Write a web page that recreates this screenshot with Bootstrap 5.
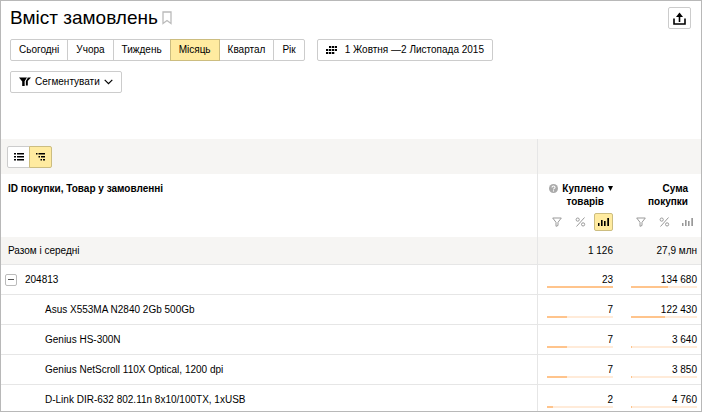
<!DOCTYPE html>
<html lang="uk">
<head>
<meta charset="utf-8">
<meta name="viewport" content="width=device-width, initial-scale=1">
<title>Вміст замовлень</title>
<link href="https://cdn.jsdelivr.net/npm/bootstrap@5.3.0/dist/css/bootstrap.min.css" rel="stylesheet">
<style>
body { font-family: "Liberation Sans", Arial, sans-serif; font-size: 10px; line-height: 14px; color: #000; background: #fff; }
.frame { height: 100vh; border: 1px solid #b8b8b8; }
.page-title { font-size: 19px; line-height: 22px; font-weight: 400; }
.page-head { padding: 6px 10px 0 9px; }
.tools { padding: 10px 9px 0; gap: 12px; }
.btn { --bs-btn-font-size: 10px; --bs-btn-line-height: 14px; --bs-btn-padding-x: 8px; --bs-btn-padding-y: 3px; --bs-btn-border-radius: 2px; --bs-btn-border-color: #ccc; --bs-btn-color: #000; --bs-btn-bg: #fff; --bs-btn-hover-bg: #f6f5f3; --bs-btn-hover-border-color: #bbb; --bs-btn-active-bg: #ffeba0; --bs-btn-active-border-color: #ccbd80; --bs-btn-active-color: #000; height: 22px; display: inline-flex; align-items: center; justify-content: center; white-space: nowrap; }
.btn-square { --bs-btn-padding-x: 0px; width: 23px; }
.segment-bar { padding: 10px 9px 46px; }
.report { table-layout: fixed; border-collapse: separate; border-spacing: 0; }
.report th, .report td { padding: 0 9px; }
.report .num { width: 84px; text-align: right; }
.report .num:nth-child(2) { width: 85px; border-left: 1px solid #e6e6e6; }
.report .num:last-child { width: 79px; padding-right: 4px; }
.report .name { padding-left: 7px; }
.report .strip .name { padding-left: 6px; }
.strip td { background: #f6f5f3; height: 35px; }
.heads th { height: 63px; padding-top: 8px; vertical-align: top; }
.totals td { background: #f6f5f3; height: 28px; border-bottom: 1px solid #e6e6e6; vertical-align: middle; }
.item td { height: 30px; border-bottom: 1px solid #e6e6e6; padding-top: 8px; line-height: 13px; vertical-align: top; }
.report .item .name { padding-left: 4px; }
.report .child .name { padding-left: 44px; }
.fold { width: 12px; height: 12px; border: 1px solid #bbb; border-radius: 2px; background: #fff; }
.meter { height: 2px; background: #ffebd9; }
.meter-fill { height: 2px; background: #ffc48c; }
.col-label { line-height: 13px; }
.col-label-end { padding-right: 9px; }
.col-icons { margin-top: 5px; height: 18px; }
.icon-btn { width: 19px; height: 18px; border: 1px solid transparent; border-radius: 2px; background: none; color: #999; }
.icon-btn.on { background: #ffeba0; border-color: #ccbd80; color: #000; }
svg { display: block; flex: none; }
</style>
<script src="https://cdn.jsdelivr.net/npm/bootstrap@5.3.0/dist/js/bootstrap.bundle.min.js"></script>
</head>
<body>
<svg class="d-none" aria-hidden="true">
  <symbol id="funnel" viewBox="0 0 10 10"><path d="M.7 1h8.600L6 5.300v3.200l-2 .8v-4z" fill="none" stroke="currentColor"/></symbol>
  <symbol id="percent" viewBox="0 0 11 10"><path d="M9.500 .5L1.500 9.500" stroke="currentColor" fill="none"/><circle cx="2.700" cy="2.600" r="1.600" stroke="currentColor" fill="none"/><circle cx="8.100" cy="7.400" r="1.600" stroke="currentColor" fill="none"/></symbol>
  <symbol id="bars" viewBox="0 0 11 8"><path d="M0 5h1.500v3H0zM3 2h1.600v6H3zM6 3h1.600v5H6zM9.300 0H11v8H9.300z" fill="currentColor"/></symbol>
</svg>
<div class="frame overflow-hidden d-flex flex-column">
  <header class="page-head d-flex justify-content-between align-items-start">
    <div class="d-flex align-items-center gap-1">
      <h1 class="page-title m-0">Вміст замовлень</h1>
      <svg width="10" height="14" viewBox="0 0 10 14" fill="none" stroke="#bbb" stroke-width="1.300"><path d="M1 1h8v11.500L5 9.500l-4 3z"/></svg>
    </div>
    <button type="button" class="btn btn-square" aria-label="Експорт">
      <svg width="13" height="13" viewBox="0 0 13 13" fill="none" stroke="#000" stroke-width="1.600"><path d="M1 6.500V12h11V6.500M6.500 10V2"/><path d="M3 5l3.500-4.500L10 5z" fill="#000" stroke="none"/></svg>
    </button>
  </header>
  <div class="tools d-flex">
    <div class="btn-group" role="group" aria-label="Період">
      <button type="button" class="btn">Сьогодні</button>
      <button type="button" class="btn">Учора</button>
      <button type="button" class="btn">Тиждень</button>
      <button type="button" class="btn active">Місяць</button>
      <button type="button" class="btn">Квартал</button>
      <button type="button" class="btn">Рік</button>
    </div>
    <button type="button" class="btn gap-2">
      <svg width="11" height="8" viewBox="0 0 11 8" fill="#000"><path d="M3 0h2.300v2H3zM6 0h2.300v2H6zM9 0h2v2H9zM0 3h2.300v2H0zM3 3h2.300v2H3zM6 3h2.300v2H6zM9 3h2v2H9zM0 6h2.300v2H0zM3 6h2.300v2H3zM6 6h2.300v2H6z"/></svg>
      <span>1 Жовтня —2 Листопада 2015</span>
    </button>
  </div>
  <div class="segment-bar">
    <button type="button" class="btn gap-1">
      <svg width="12" height="10" viewBox="0 0 12 10"><path d="M0 .5h8L5.800 4v5H3.200V4.500z" fill="#000"/><path d="M8.500 .5H12L8.800 4v4.500H6.800V4z" fill="#000"/><path d="M9 .2L6.200 4.300V9" fill="none" stroke="#fff" stroke-width=".6"/></svg>
      <span>Сегментувати</span>
      <svg width="9" height="6" viewBox="0 0 9 6" fill="none" stroke="#000" stroke-width="1.200"><path d="M.7 .8l3.800 3.800L8.300 .8"/></svg>
    </button>
  </div>
  <table class="report w-100">
    <thead>
      <tr class="strip">
        <td class="name">
          <div class="btn-group" role="group" aria-label="Вигляд">
            <button type="button" class="btn btn-square" aria-label="Список"><svg width="10" height="8" viewBox="0 0 10 8" fill="#000"><path d="M0 0h2v1.500H0zM3 0h7v1.500H3zM0 3h2v1.500H0zM3 3h7v1.500H3zM0 6h2v1.500H0zM3 6h7v1.500H3z"/></svg></button>
            <button type="button" class="btn btn-square active" aria-label="Дерево"><svg width="10" height="8" viewBox="0 0 10 8" fill="#000"><path d="M0 0h1.500v1.500H0zM2.500 0H9v1.500H2.500zM2.500 3H4v1.500H2.500zM5 3h4v1.500H5zM4.500 6H6v1.500H4.500zM7 6h2v1.500H7z"/></svg></button>
          </div>
        </td>
        <td class="num"></td><td class="num"></td>
      </tr>
      <tr class="heads">
        <th class="name" scope="col">ID покупки, Товар у замовленні</th>
        <th class="num" scope="col">
          <div class="d-flex justify-content-end gap-1">
            <svg width="9" height="13" viewBox="0 0 9 13"><circle cx="4.500" cy="6.500" r="4.500" fill="#aaa"/><path d="M3 5.600c0-2 3-2 3-.2 0 1-1.500 1-1.500 2.100M4.500 8.200v1.200" stroke="#fff" stroke-width="1.100" fill="none"/></svg>
            <div class="col-label">Куплено<br>товарів</div>
            <svg width="5" height="13" viewBox="0 0 5 13"><path d="M0 4h5L2.500 9z"/></svg>
          </div>
          <div class="col-icons d-flex justify-content-between">
            <button type="button" class="icon-btn p-0 d-flex align-items-center justify-content-center" aria-label="Фільтр"><svg width="10" height="10"><use href="#funnel"/></svg></button>
            <button type="button" class="icon-btn p-0 d-flex align-items-center justify-content-center" aria-label="Відсотки"><svg width="11" height="10"><use href="#percent"/></svg></button>
            <button type="button" class="icon-btn on p-0 d-flex align-items-center justify-content-center" aria-label="Графік"><svg width="11" height="8"><use href="#bars"/></svg></button>
          </div>
        </th>
        <th class="num" scope="col">
          <div class="col-label col-label-end">Сума<br>покупки</div>
          <div class="col-icons d-flex justify-content-between">
            <button type="button" class="icon-btn p-0 d-flex align-items-center justify-content-center" aria-label="Фільтр"><svg width="10" height="10"><use href="#funnel"/></svg></button>
            <button type="button" class="icon-btn p-0 d-flex align-items-center justify-content-center" aria-label="Відсотки"><svg width="11" height="10"><use href="#percent"/></svg></button>
            <button type="button" class="icon-btn p-0 d-flex align-items-center justify-content-center" aria-label="Графік"><svg width="11" height="8"><use href="#bars"/></svg></button>
          </div>
        </th>
      </tr>
    </thead>
    <tbody>
      <tr class="totals"><td class="name">Разом і середні</td><td class="num">1 126</td><td class="num">27,9 млн</td></tr>
      <tr class="item">
        <td class="name"><div class="d-flex align-items-center gap-2"><button type="button" class="fold p-0 d-flex align-items-center justify-content-center" aria-label="Згорнути"><svg width="6" height="1"><path d="M0 0h6v1H0z" fill="#555"/></svg></button>204813</div></td>
        <td class="num">23<div class="meter"><div class="meter-fill" style="width:100%"></div></div></td>
        <td class="num">134 680<div class="meter"><div class="meter-fill" style="width:56%"></div></div></td>
      </tr>
      <tr class="item child"><td class="name">Asus X553MA N2840 2Gb 500Gb</td>
        <td class="num">7<div class="meter"><div class="meter-fill" style="width:30%"></div></div></td>
        <td class="num">122 430<div class="meter"><div class="meter-fill" style="width:52%"></div></div></td></tr>
      <tr class="item child"><td class="name">Genius HS-300N</td>
        <td class="num">7<div class="meter"><div class="meter-fill" style="width:30%"></div></div></td>
        <td class="num">3 640<div class="meter"><div class="meter-fill" style="width:2%"></div></div></td></tr>
      <tr class="item child"><td class="name">Genius NetScroll 110X Optical, 1200 dpi</td>
        <td class="num">7<div class="meter"><div class="meter-fill" style="width:30%"></div></div></td>
        <td class="num">3 850<div class="meter"><div class="meter-fill" style="width:2%"></div></div></td></tr>
      <tr class="item child"><td class="name">D-Link DIR-632 802.11n 8x10/100TX, 1xUSB</td>
        <td class="num">2<div class="meter"><div class="meter-fill" style="width:9%"></div></div></td>
        <td class="num">4 760<div class="meter"><div class="meter-fill" style="width:2%"></div></div></td></tr>
    </tbody>
  </table>
</div>
</body>
</html>
